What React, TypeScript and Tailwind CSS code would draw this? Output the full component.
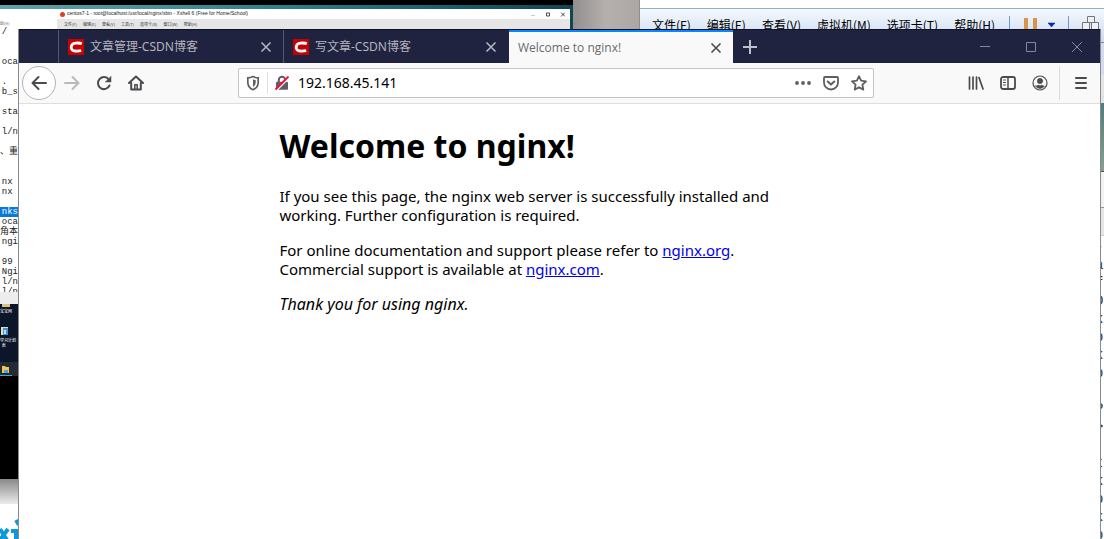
import type { ReactNode } from 'react';

interface TabProps {
  title: string;
}

const consoleLines = [
  '/  ', '', '', 'oca', '', '.  ', 'b_s', '', 'sta', '', 'l/n', '', '、重', '', '',
  'nx ', 'nx ', '', 'nks', 'oca', '角本', 'ngi', '', '99 ', 'Ngi', 'l/n', 'l/n',
];

const editorLines = ['-', 'a', 'f', 'D', 'k', 'p', 'k', 'p', '', 'P', '>', '', 't', 'k', 'p', 'k', 'p'];

const vmMenus = ['文件(F)', '编辑(E)', '查看(V)', '虚拟机(M)', '选项卡(T)', '帮助(H)'];

const xshellMenus = ['文件(F)', '编辑(E)', '查看(V)', '工具(T)', '选项卡(B)', '窗口(W)', '帮助(H)'];

const CloseIcon = ({ className }: { className: string }) => (
  <svg className={className} viewBox="0 0 12 12" fill="none" stroke="currentColor" strokeWidth="1.6">
    <path d="M1.5 1.5l9 9M10.5 1.5l-9 9" />
  </svg>
);

const CsdnLogo = () => (
  <svg className="h-4 w-4 shrink-0" viewBox="0 0 16 16">
    <rect width="16" height="16" fill="#c80000" />
    <path d="M13.8 4.6C12 4 9.500 3.900 7.500 4.100 4.800 4.400 3.300 6 3.200 8.200c-.1 2.400 1.500 3.700 4.100 3.800 2.200.1 4 0 5.900-.4" fill="none" stroke="#fff" strokeWidth="2.800" />
  </svg>
);

const Tab = ({ title }: TabProps) => (
  <div className="flex w-[225px] items-center gap-1.5 border-l border-[#565870] pl-[9px] pr-[11px] text-[#b4b4bf]">
    <CsdnLogo />
    <span className="flex-1 font-['Noto_Sans','Noto_Sans_CJK_SC',sans-serif] text-xs">{title}</span>
    <button aria-label="关闭标签页">
      <CloseIcon className="h-3 w-3" />
    </button>
  </div>
);

const ToolButton = ({ label, children }: { label: string; children: ReactNode }) => (
  <button aria-label={label} className="flex h-8 w-8 items-center justify-center text-[#4a4a4f]">
    <svg className="h-4 w-4" viewBox="0 0 16 16" fill="none" stroke="currentColor" strokeWidth="2" strokeLinecap="round" strokeLinejoin="round">
      {children}
    </svg>
  </button>
);

const TabStrip = () => (
  <div className="flex h-[34px] border-t border-[#101325] bg-[#20233f] pl-[39px]">
    <Tab title="文章管理-CSDN博客" />
    <Tab title="写文章-CSDN博客" />
    <div className="ml-px flex w-[224px] items-center border-t-2 border-[#0a84ff] bg-[#f9f9fa] pl-[9px] pr-[11px] text-[#6a6a6e]">
      <span className="flex-1 font-['Open_Sans','Noto_Sans_CJK_SC',sans-serif] text-xs">Welcome to nginx!</span>
      <button aria-label="关闭标签页" className="text-[#4a4a4f]">
        <CloseIcon className="h-3 w-3" />
      </button>
    </div>
    <button aria-label="新建标签页" className="flex w-[34px] items-center justify-center text-[#c0c0cc]">
      <svg className="h-4 w-4" viewBox="0 0 16 16" fill="none" stroke="currentColor" strokeWidth="2">
        <path d="M8 1v14M1 8h14" />
      </svg>
    </button>
    <div className="ml-auto flex text-[#85879a]">
      <button aria-label="最小化" className="flex w-[46px] items-center justify-center">
        <svg className="h-3 w-3" viewBox="0 0 12 12" stroke="currentColor"><path d="M1 5.500h10" /></svg>
      </button>
      <button aria-label="最大化" className="flex w-[46px] items-center justify-center">
        <svg className="h-3 w-3" viewBox="0 0 12 12" fill="none" stroke="currentColor"><path d="M1.500 1.500h9v9h-9z" /></svg>
      </button>
      <button aria-label="关闭" className="flex w-[46px] items-center justify-center">
        <svg className="h-3 w-3" viewBox="0 0 12 12" stroke="currentColor"><path d="M1 1l10 10M11 1L1 11" /></svg>
      </button>
    </div>
  </div>
);

const AddressBar = () => (
  <div className="flex h-[30px] min-w-0 flex-1 items-center rounded-xs border border-[#c4c4c6] bg-white text-[#5f5f63]">
    <svg className="ml-1.5 h-4 w-4" viewBox="0 0 16 16">
      <path d="M8 1.600c1.800.9 3.700 1.300 5.200 1.300v4.300c0 3.600-2 6.200-5.200 7.500-3.200-1.300-5.200-3.900-5.200-7.500V2.900c1.500 0 3.400-.4 5.200-1.300z" fill="none" stroke="currentColor" strokeWidth="1.700" />
      <path d="M8 4.500v7.400c1.700-1 2.700-2.600 2.700-4.700V5.100C9.700 5 8.800 4.800 8 4.500z" fill="currentColor" />
    </svg>
    <span className="ml-1.5 h-[22px] w-px bg-[#e0e0e1]" />
    <svg className="ml-1.5 h-4 w-4" viewBox="0 0 16 16">
      <path d="M4.800 7V5a3.200 3.200 0 0 1 6.400 0v2" fill="none" stroke="currentColor" strokeWidth="2" />
      <rect x="2" y="6.800" width="12" height="8" rx="1" fill="currentColor" />
      <path d="M2.500 15.500L15 3" stroke="#fff" strokeWidth="1.500" />
      <path d="M1.500 14.500L14.500 1.500" stroke="#ff0a3c" strokeWidth="1.800" />
    </svg>
    <input
      aria-label="地址栏"
      defaultValue="192.168.45.141"
      className="ml-2 min-w-0 flex-1 bg-transparent font-['Noto_Sans',sans-serif] text-sm text-black outline-none"
    />
    <div className="flex items-center gap-3 pr-1.5">
      <button aria-label="页面操作">
        <svg className="h-4 w-4" viewBox="0 0 16 16" fill="currentColor">
          <circle cx="2" cy="8" r="1.900" /><circle cx="8" cy="8" r="1.900" /><circle cx="14" cy="8" r="1.900" />
        </svg>
      </button>
      <button aria-label="保存到 Pocket">
        <svg className="h-4 w-4" viewBox="0 0 16 16" fill="none" stroke="currentColor" strokeLinecap="round" strokeLinejoin="round">
          <path d="M2 2h12a1 1 0 0 1 1 1v4.500a7 7 0 0 1-14 0V3a1 1 0 0 1 1-1z" strokeWidth="1.800" />
          <path d="M4.700 6.500L8 9.600l3.300-3.100" strokeWidth="2" />
        </svg>
      </button>
      <button aria-label="添加书签">
        <svg className="h-4 w-4" viewBox="0 0 16 16" fill="none" stroke="currentColor" strokeWidth="1.800" strokeLinejoin="round">
          <path d="M8 1.200l2.100 4.500 4.900.6-3.600 3.400.9 4.900L8 12.200l-4.300 2.400.9-4.900L1 6.300l4.900-.6z" />
        </svg>
      </button>
    </div>
  </div>
);

const Toolbar = () => (
  <div className="flex h-[41px] items-center border-b border-[#dedede] bg-[#f9f9fa] pl-[3px] pr-[3px]">
    <button aria-label="后退" className="flex h-[34px] w-[34px] items-center justify-center rounded-full border border-[#b4b4b6] bg-white text-[#4a4a4f]">
      <svg className="h-4 w-4" viewBox="0 0 16 16" fill="none" stroke="currentColor" strokeWidth="2" strokeLinecap="round" strokeLinejoin="round">
        <path d="M15 8H1.500M7.500 2l-6 6 6 6" />
      </svg>
    </button>
    <button aria-label="前进" disabled className="flex h-8 w-8 items-center justify-center text-[#b9b9bb]">
      <svg className="h-4 w-4" viewBox="0 0 16 16" fill="none" stroke="currentColor" strokeWidth="2" strokeLinecap="round" strokeLinejoin="round">
        <path d="M1 8h13.500M8.500 2l6 6-6 6" />
      </svg>
    </button>
    <ToolButton label="刷新">
      <path d="M13.500 10.500A6 6 0 1 1 12.800 4.500" />
      <path d="M15 1.500v5.500H9.500z" fill="currentColor" strokeWidth="0.500" />
    </ToolButton>
    <ToolButton label="主页">
      <path d="M1 8l7-6.500L15 8M3.200 8v6.500h9.600V8" />
      <path d="M6.800 14V9.800h2.400V14" strokeWidth="1.500" />
    </ToolButton>
    <div className="flex min-w-0 flex-1 px-[86px]">
      <AddressBar />
    </div>
    <ToolButton label="书签库">
      <path d="M1.500 2v12M5 2v12M8.500 2v12M11 2.500L15 14" strokeWidth="1.700" />
    </ToolButton>
    <ToolButton label="侧栏">
      <rect x="1" y="2" width="14" height="12" rx="2" strokeWidth="1.800" />
      <path d="M8 2v12" strokeWidth="1.500" />
      <path d="M3.500 5h2M3.500 7.500h2M3.500 10h2" strokeWidth="1" />
    </ToolButton>
    <ToolButton label="账户">
      <circle cx="8" cy="8" r="7" strokeWidth="1.200" />
      <circle cx="8" cy="6" r="2.700" fill="currentColor" strokeWidth="0.500" />
      <path d="M3.500 11c1 .2 2-.8 2.700-1 1 .7 2.600.7 3.600 0 .7.200 1.700 1.200 2.700 1-1 1.500-2.600 2.500-4.500 2.500S4.500 12.500 3.500 11z" fill="currentColor" strokeWidth="0.500" />
    </ToolButton>
    <span className="ml-[3px] mr-[5px] h-[34px] w-px bg-[#dcdcdd]" />
    <ToolButton label="打开菜单">
      <path d="M3 3h10M3 8h10M3 13h10" />
    </ToolButton>
  </div>
);

const NginxPage = () => (
  <main className="mx-auto w-[560px] pt-[22px] font-['Noto_Sans',sans-serif] text-[15px] leading-[19px] text-black">
    <h1 className="mb-[21px] text-[32px] font-bold leading-10">Welcome to nginx!</h1>
    <p className="mb-4">
      If you see this page, the nginx web server is successfully installed and<br />
      working. Further configuration is required.
    </p>
    <p className="mb-4">
      For online documentation and support please refer to{' '}
      <a href="http://nginx.org/" className="text-[#0000ee] underline">nginx.org</a>.<br />
      Commercial support is available at{' '}
      <a href="http://nginx.com/" className="text-[#0000ee] underline">nginx.com</a>.
    </p>
    <p><em className="text-base leading-[19px]">Thank you for using nginx.</em></p>
  </main>
);

const LeftDesktop = () => (
  <div className="flex flex-1 flex-col overflow-hidden">
    <div className="h-[5px] shrink-0 bg-black" />
    <div className="flex h-[287px] shrink-0 overflow-hidden bg-linear-to-r from-[#5fa3ab] via-[#2b7f8c] to-[#0f4654] pt-1 pr-[3px]">
      <div className="w-[57px] shrink-0 bg-white">
        <div className="h-[18px] pt-[10px] text-[4px] leading-[8px] text-[#666]">助(H)</div>
        {consoleLines.map((line, index) => (
          <div
            key={index}
            className={`h-[10px] w-[18px] whitespace-pre text-right font-['Liberation_Mono','Noto_Sans_CJK_SC',monospace] text-[9px] leading-[10px] ${
              line === 'nks' ? 'bg-[#0a78d7] text-white' : 'text-[#222]'
            }`}
          >
            {line}
          </div>
        ))}
      </div>
      <div className="flex-1 bg-[#e6e6e6]">
        <div className="flex h-[10px] items-center gap-0.5 bg-white pl-[3px] pr-[5px] font-['Liberation_Sans',sans-serif] text-[5px] text-[#222]">
          <span className="h-[5px] w-[5px] rounded-full bg-[#d9402b]" />
          <span className="flex-1 whitespace-nowrap">centos7-1 - root@localhost:/usr/local/nginx/sbin - Xshell 6 (Free for Home/School)</span>
          <svg className="h-[5px] w-[34px]" viewBox="0 0 34 5" fill="none" stroke="currentColor">
            <path d="M0 3.500h4" stroke="#ccc" />
            <path d="M15.500 1h3v3h-3zM30 .5l4 4M34 .5l-4 4" strokeWidth="0.800" />
          </svg>
        </div>
        <div className="flex gap-1.5 pl-[7px] text-[4px] leading-[10px] text-[#333]">
          {xshellMenus.map((menu) => (
            <span key={menu}>{menu}</span>
          ))}
        </div>
      </div>
    </div>
    <div className="h-3 shrink-0 bg-[#ededed]" />
    <div className="h-[72px] w-[18px] shrink-0 overflow-hidden bg-[#0b1628] text-[4px] leading-[5px] text-white">
      <div className="ml-0.5 h-[3px] w-2 bg-[#dfc183]" />
      <div className="h-[19px] pt-0.5">宝宝网</div>
      <svg className="h-[10px] w-[10px]" viewBox="0 0 10 10">
        <path d="M1 1h7v8H1z" fill="#e9dfb5" /><path d="M3 2h5v7H3z" fill="#3d93dd" /><path d="M4 4h2v4H4z" fill="#b9e1ff" />
      </svg>
      <div className="h-[26px] pt-0.5 whitespace-nowrap">学习计划<br />&nbsp;&nbsp;表</div>
      <svg className="h-[14px] w-[18px] bg-[#242b38]" viewBox="0 0 18 14">
        <path d="M2 4h3l1 1h3v6H2z" fill="#f2c64e" /><path d="M4 8h4v3H4z" fill="#4ba3df" /><path d="M0 13.500h12" stroke="#5f9fc4" />
      </svg>
    </div>
    <div className="h-[103px] shrink-0 bg-black" />
    <div className="h-[25px] shrink-0 bg-linear-to-b from-[#8a8a8a] to-[#ececec]" />
    <div className="flex-1 overflow-hidden bg-white">
      <svg className="mt-3 h-6 w-[18px]" viewBox="0 0 18 24" stroke="#0f97d6" strokeWidth="4" fill="none">
        <path d="M0 13l7 11M8 13L0 24M11 15h7M16 15v9M16 4l3 5" />
      </svg>
    </div>
  </div>
);

const VmwareWindow = () => (
  <div className="w-[465px] shrink-0 border-l border-[#8d8d8d] bg-white pt-2">
    <div className="flex h-[35px] items-start border-t border-b border-t-[#86b1de] border-b-[#8a8a8a] bg-linear-to-b from-[#f5f9fe] to-[#c9daef] pl-3 text-xs text-black">
      <div className="flex gap-4 whitespace-nowrap pt-2">
        {vmMenus.map((menu) => (
          <span key={menu} className="leading-4">{menu}</span>
        ))}
      </div>
      <svg className="ml-3.5 mt-[7px] h-[18px] w-[92px]" viewBox="0 0 92 18">
        <path d="M.5 0v18M59.500 0v18" stroke="#6d9cc9" />
        <path d="M15 2h4v16h-4zM24 2h4v16h-4z" fill="#d5964b" />
        <path d="M39 7h7l-3.500 4z" fill="#0a28d8" stroke="#111c5c" strokeWidth="0.500" />
        <path d="M78.500.5h7v6h-7zM73.500 6.500h7v7h-7zM82.500 6.500h7v7h-7z" fill="#eef1f5" stroke="#777" />
      </svg>
    </div>
    <div className="h-8 bg-[#d5daf0]" />
    <div className="h-7 bg-[#e4e4e4]" />
    <div className="h-[69px] border-b border-[#555] bg-linear-to-b from-[#527b7d] to-[#86a08e]" />
    <div className="h-9 border-b border-[#99958d] bg-[#f2f2f2]" />
    <div className="h-7 border-b border-[#ccc] bg-[#e6e6e6]" />
    <div className="ml-auto w-[9px] pt-0.5 font-['Liberation_Mono',monospace] text-sm leading-[18px] text-[#333]">
      {editorLines.map((line, index) => (
        <div key={index} className="h-[18px]">{line}</div>
      ))}
    </div>
  </div>
);

export default function App() {
  return (
    <div className="relative h-screen overflow-hidden bg-white font-['Noto_Sans_CJK_SC',sans-serif]">
      <div className="flex h-full">
        <LeftDesktop />
        <div className="w-[66px] shrink-0 bg-linear-to-r from-[#938f8e] via-[#b5b0ae] to-[#aca7a5]" />
        <VmwareWindow />
      </div>

      {/* Firefox */}
      <div className="absolute top-[29px] right-[3px] bottom-0 left-[18px] border-x border-[#8b8b8b] bg-white">
        <TabStrip />
        <Toolbar />
        <NginxPage />
      </div>
    </div>
  );
}
